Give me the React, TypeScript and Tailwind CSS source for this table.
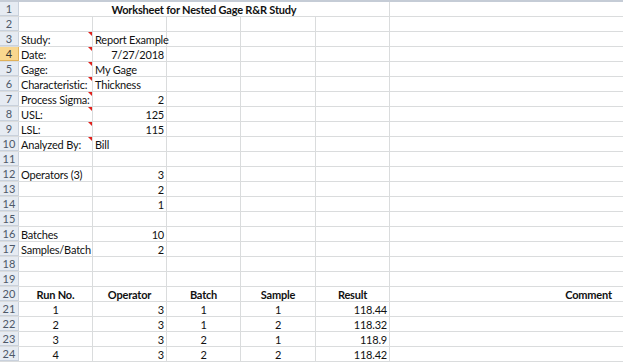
import React from "react";

type Align = "left" | "center" | "right";

interface CellIF {
  text?: string;
  align?: Align;
  bold?: boolean;
  note?: boolean;
}

// column widths incl. the 1px grid line on the right
const colWidths = ["w-[74px]", "w-[74px]", "w-[74px]", "w-[75px]", "w-[74px]", "w-[398px]"];

const alignClass: Record<Align, string> = {
  left: "justify-start pl-[2px]",
  center: "justify-center",
  right: "justify-end pr-[2px]",
};

const Cell = ({ cell, width }: { cell?: CellIF; width: string }) => (
  <div
    className={`relative flex h-full shrink-0 items-center border-r border-[#dadcdd] whitespace-nowrap ${width} ${
      alignClass[cell?.align ?? "left"]
    } ${cell?.bold ? "font-bold" : ""}`}
  >
    {cell?.text}
    {cell?.note && (
      <span className="absolute right-0 top-0 h-0 w-0 border-t-[4px] border-l-[4px] border-t-[#e0201b] border-l-transparent" />
    )}
  </div>
);

const App = () => {
  return (
    <div
      className="w-[623px] h-[362px] overflow-hidden bg-white text-[11px] leading-none tracking-[-0.2px] text-[#111]"
      style={{ fontFamily: 'Lato, "Liberation Sans", sans-serif' }}
    >
      <div className="h-[2px] bg-[#c5ccd6]" />
      {sheet.map((row, i) => (
        <div key={i} className="flex h-[15px] border-b border-[#dadcdd]">
          <div
            className={`flex w-[19px] shrink-0 items-center justify-center border-r border-b text-[11px] tracking-normal ${
              i === 3
                ? "bg-[#f9d78f] border-[#e1b25a] text-[#333]"
                : "bg-[#e6ebf2] border-[#c9d1dc] text-[#4d5868]"
            }`}
          >
            {i + 1}
          </div>
          {i === 0 ? (
            <>
              <div className="flex h-full w-[371px] shrink-0 items-center justify-center border-r border-[#dadcdd] font-bold">
                Worksheet for Nested Gage R&amp;R Study
              </div>
              <Cell width={colWidths[5]} />
            </>
          ) : (
            colWidths.map((w, c) => <Cell key={c} width={w} cell={row[c]} />)
          )}
        </div>
      ))}
    </div>
  );
};

export default App;

const L = (text: string, note = true): CellIF => ({ text, note });
const R = (text: string): CellIF => ({ text, align: "right" });
const C = (text: string, bold = false): CellIF => ({ text, align: "center", bold });

const sheet: (CellIF | undefined)[][] = [
  [],
  [],
  [L("Study:"), { text: "Report Example" }],
  [L("Date:"), R("7/27/2018")],
  [L("Gage:"), { text: "My Gage" }],
  [L("Characteristic:"), { text: "Thickness" }],
  [L("Process Sigma:"), R("2")],
  [L("USL:"), R("125")],
  [L("LSL:"), R("115")],
  [L("Analyzed By:"), { text: "Bill" }],
  [],
  [L("Operators (3)", false), R("3")],
  [undefined, R("2")],
  [undefined, R("1")],
  [],
  [L("Batches", false), R("10")],
  [L("Samples/Batch", false), R("2")],
  [],
  [],
  [C("Run No.", true), C("Operator", true), C("Batch", true), C("Sample", true), C("Result", true), C("Comment", true)],
  [C("1"), R("3"), C("1"), C("1"), R("118.44")],
  [C("2"), R("3"), C("1"), C("2"), R("118.32")],
  [C("3"), R("3"), C("2"), C("1"), R("118.9")],
  [C("4"), R("3"), C("2"), C("2"), R("118.42")],
];
